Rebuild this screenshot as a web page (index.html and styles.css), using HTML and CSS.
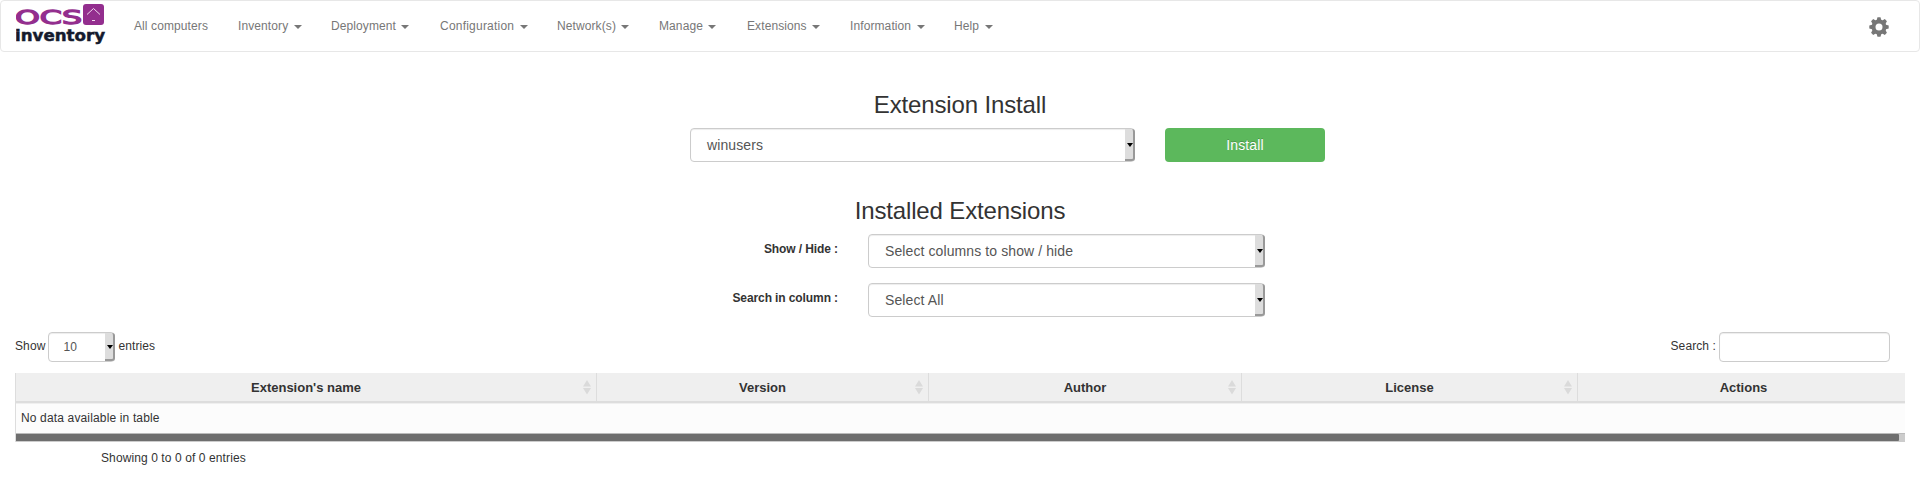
FILE: index.html
```html
<!DOCTYPE html>
<html lang="en">
<head>
<meta charset="utf-8">
<title>OCS Inventory</title>
<link rel="stylesheet" href="styles.css">
</head>
<body>
<nav class="navbar">
  <svg class="logo" width="90" height="44" viewBox="0 0 90 44" role="img" aria-label="OCS inventory">
    <text class="logo-ocs" x="-1" y="23" textLength="67" lengthAdjust="spacingAndGlyphs">OCS</text>
    <rect x="67" y="3" width="21" height="21" rx="3" fill="#932e8e"/>
    <path d="M71 13.500 77.500 7.500 84 13.500M76 19.500h3" fill="none" stroke="#f0d8ef" stroke-width="1"/>
    <text class="logo-inv" x="-1" y="39.500" textLength="90" lengthAdjust="spacingAndGlyphs">inventory</text>
  </svg>
  <ul class="menu">
    <li>All computers</li>
    <li>Inventory <span class="caret"></span></li>
    <li>Deployment <span class="caret"></span></li>
    <li class="spaced">Configuration <span class="caret"></span></li>
    <li>Network(s) <span class="caret"></span></li>
    <li>Manage <span class="caret"></span></li>
    <li>Extensions <span class="caret"></span></li>
    <li>Information <span class="caret"></span></li>
    <li>Help <span class="caret"></span></li>
  </ul>
  <svg class="gear" width="20" height="20" viewBox="-10 -10 20 20">
    <g fill="#777">
      <g id="teeth"><path id="t" d="M-2.600-6-1.500-9.700h3L2.600-6V6L1.500 9.700h-3L-2.600 6z"/><use href="#t" transform="rotate(90)"/></g>
      <use href="#teeth" transform="rotate(45)"/>
      <circle r="7.400"/>
    </g>
    <circle r="3.500" fill="#fff"/>
  </svg>
</nav>
<main>
  <h3 class="title-install">Extension Install</h3>
  <div class="install-row">
    <div class="select select-ext"><span>winusers</span><i class="drop"></i></div>
    <button class="btn">Install</button>
  </div>
  <h3 class="title-installed">Installed Extensions</h3>
  <div class="filter"><label>Show / Hide :</label><div class="select select-col"><span>Select columns to show / hide</span><i class="drop"></i></div></div>
  <div class="filter"><label>Search in column :</label><div class="select select-col"><span>Select All</span><i class="drop"></i></div></div>
  <div class="controls">
    <div class="length">Show <div class="select select-len"><span>10</span><i class="drop"></i></div> entries</div>
    <div class="search">Search : <input type="text" class="search-input"></div>
  </div>
  <div class="table">
    <div class="thead">
      <div class="th">Extension's name<svg class="sort" width="8" height="14"><path d="M0 6.500 4 0 8 6.500zM0 8 4 14.500 8 8z"/></svg></div>
      <div class="th">Version<svg class="sort" width="8" height="14"><path d="M0 6.500 4 0 8 6.500zM0 8 4 14.500 8 8z"/></svg></div>
      <div class="th">Author<svg class="sort" width="8" height="14"><path d="M0 6.500 4 0 8 6.500zM0 8 4 14.500 8 8z"/></svg></div>
      <div class="th">License<svg class="sort" width="8" height="14"><path d="M0 6.500 4 0 8 6.500zM0 8 4 14.500 8 8z"/></svg></div>
      <div class="th">Actions</div>
    </div>
    <div class="empty">No data available in table</div>
    <div class="scroll"><div class="thumb"></div></div>
  </div>
  <p class="info">Showing 0 to 0 of 0 entries</p>
</main>
</body>
</html>
```
FILE: styles.css
```css
* { box-sizing: border-box; }
body { margin: 0; background: #fff; color: #333; font: 12px/20px "Liberation Sans", Arial, sans-serif; letter-spacing: .1px; overflow: hidden; }
.navbar { display: flex; height: 52px; border: 1px solid #e7e7e7; border-radius: 4px; padding-left: 15px; }
.logo { flex: none; letter-spacing: 0; }
.logo-ocs { font: 19.500px "DejaVu Sans", sans-serif; fill: #932e8e; stroke: #932e8e; stroke-width: 1.300px; }
.logo-inv { font: bold 16px "DejaVu Sans", sans-serif; fill: #151a2d; stroke: #151a2d; stroke-width: .5px; }
.menu { display: grid; grid-template-columns: 104px 93px 109px 117px 102px 88px 103px 104px 70px; margin: 0; padding: 0 0 0 13px; list-style: none; color: #777; }
.menu li { padding: 15px 0 15px 15px; white-space: nowrap; }
.menu .spaced { letter-spacing: .22px; }
.caret { display: inline-block; width: 0; height: 0; margin-left: 2px; vertical-align: middle; border-top: 4px solid; border-right: 4px solid transparent; border-left: 4px solid transparent; }
.gear { margin: 16px 30px 0 auto; }
h3 { margin: 0; font-weight: 500; font-size: 24px; line-height: 26px; text-align: center; letter-spacing: -.14px; }
.title-install { padding-top: 40px; }
.install-row { display: flex; gap: 30px; margin: 10px 0 0 690px; }
.select { display: flex; justify-content: space-between; height: 34px; border: 1px solid #ccc; border-radius: 4px; background: #fff; color: #555; font-size: 14px; line-height: 32px; padding-left: 16px; box-shadow: inset 0 1px 1px rgba(0,0,0,.075); }
.select-ext { width: 445px; }
.select-col { width: 397px; }
.drop { display: flex; align-items: center; justify-content: center; width: 10px; margin-right: -1px; background: #ddd; border-right: 2px solid #999; border-bottom: 2px solid #999; border-radius: 0 3px 3px 0; padding: 2px 0 0 1px; }
.drop::before { content: ""; border-top: 4px solid #000; border-left: 3px solid transparent; border-right: 3px solid transparent; }
.btn { width: 160px; height: 34px; border: 0; border-radius: 4px; background: #5cb85c; color: #fff; font: 14px/20px "Liberation Sans", Arial, sans-serif; letter-spacing: .1px; padding: 0; text-shadow: 0 -1px 0 rgba(0,0,0,.2); }
.title-installed { padding-top: 36px; margin-bottom: 10px; }
.filter { display: flex; gap: 30px; margin-bottom: 15px; }
.filter label { width: 838px; padding-top: 5px; text-align: right; font-weight: bold; letter-spacing: -.1px; }
.controls { display: flex; justify-content: space-between; height: 41px; padding: 0 30px 0 15px; }
.length, .search { display: flex; height: 30px; line-height: 28px; gap: 3px; }
.select-len { width: 67px; height: 30px; padding-left: 14px; font-size: 12px; line-height: 29px; }
.search-input { width: 171px; height: 30px; border: 1px solid #ccc; border-radius: 4px; box-shadow: inset 0 1px 1px rgba(0,0,0,.075); }
.table { margin: 0 15px; overflow: hidden; border-left: 1px solid #ddd; }
.thead { display: grid; grid-template-columns: 581px 332px 313px 336px 332px; height: 31px; background: linear-gradient(#efefef 28px, #ddd 28px, #ddd 30px, #efefef 30px); }
.th { position: relative; height: 30px; border-right: 1px solid #ddd; text-align: center; font-size: 13px; font-weight: bold; line-height: 29px; letter-spacing: 0; }
.sort { position: absolute; right: 5px; top: 7px; fill: #dadada; overflow: visible; }
.empty { height: 29px; padding-left: 5px; background: #fcfcfc; line-height: 29px; letter-spacing: .15px; }
.scroll { height: 9px; border-top: 1px solid #bbb; border-bottom: 1px solid #ccc; background: #ccc; }
.thumb { width: 1883px; height: 7px; background: #6e6e6e; border-radius: 0 1px 1px 0; }
.info { margin: 6px 0 0 101px; }
```
